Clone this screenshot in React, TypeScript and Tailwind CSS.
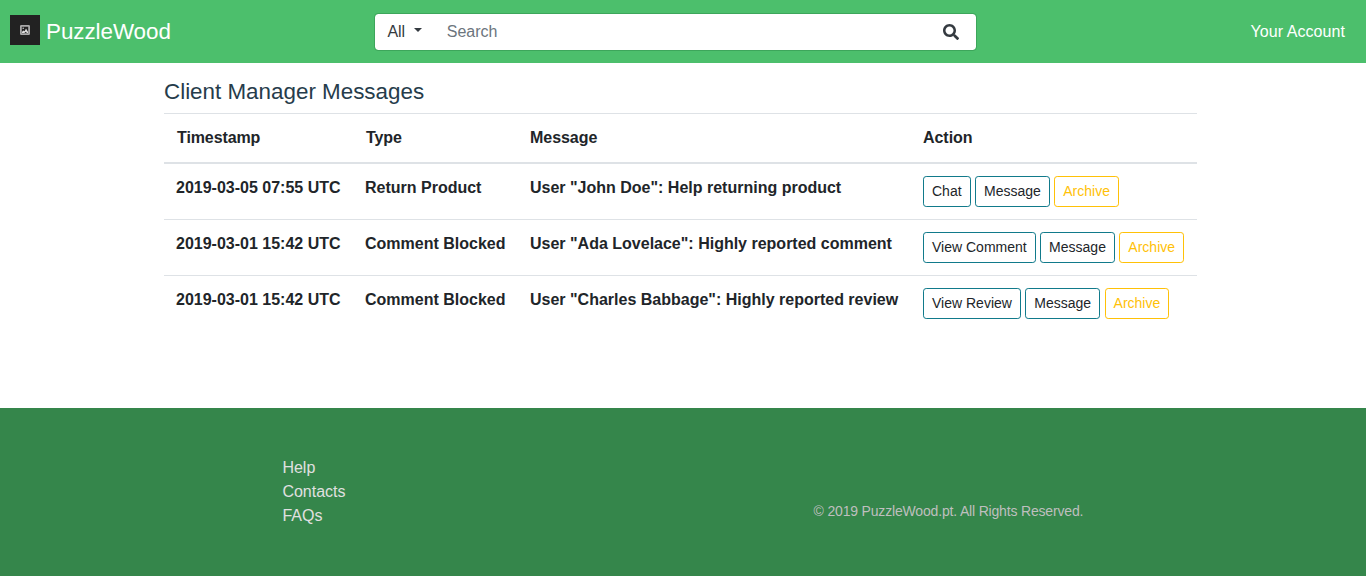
import React from "react";

type Row = { time: string; type: string; message: string; view: string };

const rows: Row[] = [
  { time: "2019-03-05 07:55 UTC", type: "Return Product", message: 'User "John Doe": Help returning product', view: "Chat" },
  { time: "2019-03-01 15:42 UTC", type: "Comment Blocked", message: 'User "Ada Lovelace": Highly reported comment', view: "View Comment" },
  { time: "2019-03-01 15:42 UTC", type: "Comment Blocked", message: 'User "Charles Babbage": Highly reported review', view: "View Review" },
];

const columns = "grid font-bold";

function LogoMark() {
  return (
    <svg width="30" height="30" viewBox="0 0 30 30" className="mb-1 shrink-0">
      <rect width="30" height="30" fill="#222" />
      <rect x="10.9" y="10.9" width="8.2" height="8.2" rx="0.4" fill="none" stroke="#aaa" strokeWidth="1.8" />
      <path d="M12 18v-1.3l1.6-1.2 1 .7 1.4-2.6 2 3.2V18h-1.2l-.9-1.2-1.5 1.2z" fill="#ddd" />
      <circle cx="13.2" cy="13.3" r="0.8" fill="#ccc" />
    </svg>
  );
}

function Header() {
  return (
    <header className="flex h-[63px] items-center bg-[#4cbf6c] pl-2.5 pr-[21px] pt-px">
      <a className="flex w-[364px] items-center gap-1.5 text-[22.4px] leading-[30px] tracking-[-0.05px] text-white">
        <LogoMark />
        <span>PuzzleWood</span>
      </a>
      <form className="flex h-[38px] w-[603px] items-center rounded border border-[#3da65b] bg-white bg-clip-padding">
        <button type="button" className="flex items-center pl-[12.4px] text-[#343a40]">
          All
          <span className="ml-[9px] mb-1 border-x-[4.8px] border-t-[4.8px] border-x-transparent border-t-[#343a40]" />
        </button>
        <span className="ml-[24.6px] flex-1 text-[#6c757d]">Search</span>
        <svg width="16" height="16" viewBox="0 0 512 512" className="mr-[17px]" fill="#343a40">
          <path d="M505 442.700L405.300 343c-4.500-4.500-10.600-7-17-7H372c27.600-35.300 44-79.700 44-128C416 93.100 322.900 0 208 0S0 93.100 0 208s93.100 208 208 208c48.300 0 92.700-16.400 128-44v16.300c0 6.400 2.500 12.500 7 17l99.700 99.700c9.400 9.400 24.600 9.400 33.900 0l28.300-28.300c9.400-9.400 9.400-24.600.1-34zM208 336c-70.700 0-128-57.200-128-128 0-70.700 57.200-128 128-128 70.700 0 128 57.200 128 128 0 70.700-57.200 128-128 128z" />
        </svg>
      </form>
      <a className="ml-auto text-right tracking-[0.06px] text-white">Your Account</a>
    </header>
  );
}

function ActionButton({ label, warning = false }: { label: string; warning?: boolean }) {
  const tone = warning ? "border-[#ffc107] text-[#ffc107]" : "border-[#117a8b] text-[#212529]";
  return (
    <button type="button" className={`h-[31px] rounded-[3.2px] border px-2 text-sm leading-[21px] ${tone}`}>
      {label}
    </button>
  );
}

function Messages() {
  return (
    <main className="ml-[164px] h-[345px] w-[1033px] pt-[15px]">
      <h1 className="h-[35px] text-[22.4px] leading-[27px] text-[#263c4b]">Client Manager Messages</h1>
      <div className={`${columns} h-[51px] grid-cols-[189px_164px_393px_274px] border-t border-b-2 border-t-[#dee2e6] border-b-[#dee2e6] pt-3 pl-[13px]`}>
        <span className="tracking-[-0.1px]">Timestamp</span>
        <span className="tracking-[-0.1px]">Type</span>
        <span className="tracking-[-0.05px]">Message</span>
        <span className="tracking-[-0.05px]">Action</span>
      </div>
      {rows.map((row, i) => (
        <div key={i} className={`${columns} grid-cols-[189px_165px_393px_274px] pl-3 pt-3 ${i === 0 ? "h-[55px]" : "h-14 border-t border-[#dee2e6]"}`}>
          <span>{row.time}</span>
          <span>{row.type}</span>
          <span>{row.message}</span>
          <div className="flex gap-[4.45px] font-normal">
            <ActionButton label={row.view} />
            <ActionButton label="Message" />
            <ActionButton label="Archive" warning />
          </div>
        </div>
      ))}
    </main>
  );
}

function Footer() {
  return (
    <footer className="flex h-[168px] bg-[#35864b]">
      <nav className="ml-[282.4px] mt-12 flex w-[531.2px] flex-col text-[#e0e0e0]">
        <a>Help</a>
        <a>Contacts</a>
        <a>FAQs</a>
      </nav>
      <p className="mt-[93px] text-sm leading-[21px] tracking-[-0.175px] text-[#bfbfbf]">© 2019 PuzzleWood.pt. All Rights Reserved.</p>
    </footer>
  );
}

export default function App() {
  return (
    <div className="h-[576px] w-[1366px] overflow-hidden bg-white font-['Liberation_Sans',Arial,sans-serif] text-base leading-6 text-[#212529]">
      <Header />
      <Messages />
      <Footer />
    </div>
  );
}
